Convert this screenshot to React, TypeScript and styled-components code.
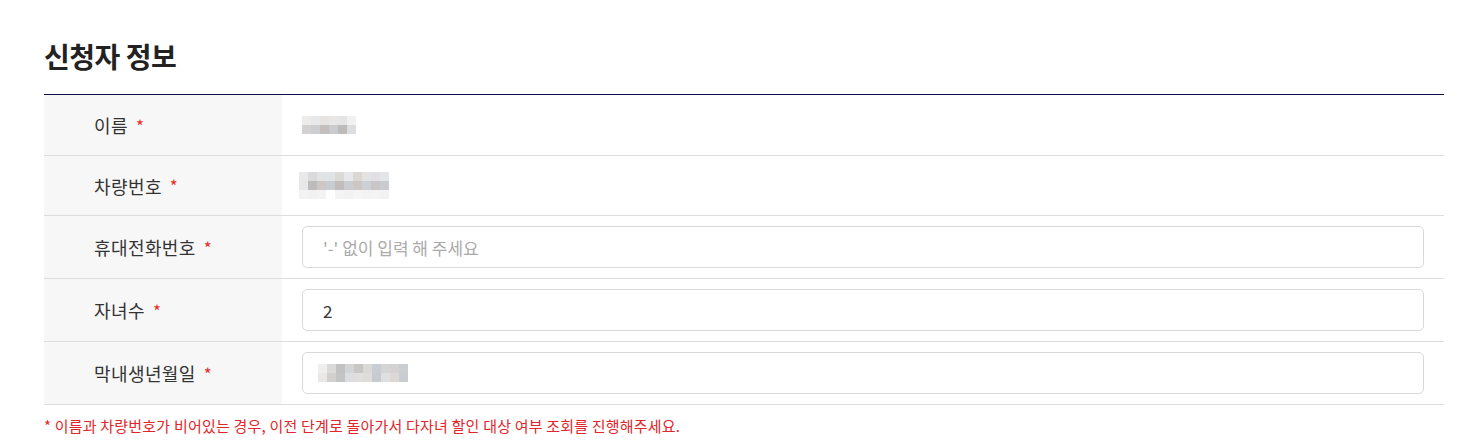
import React from "react";
import styled, { createGlobalStyle } from "styled-components";

const Global = createGlobalStyle`
  html, body { margin: 0; padding: 0; background: #fff; }
  body { font-family: "Noto Sans CJK KR", "Noto Sans", sans-serif; color: #333; }
  * { box-sizing: border-box; }
`;

const Page = styled.div`
  padding: 36px 20px 0 44px;
  width: 1464px;
`;

const Title = styled.h2`
  margin: 0 0 18px;
  font-size: 28px;
  line-height: 40px;
  font-weight: 700;
  color: #222;
  letter-spacing: -0.5px;
`;

const Table = styled.div`
  width: 1400px;
  border-top: 1px solid #0b1148;
`;

const Row = styled.div<{ $h: number }>`
  display: grid;
  grid-template-columns: 238px 1fr;
  height: ${(p) => p.$h}px;
  border-bottom: 1px solid #dedede;
`;

const Label = styled.div`
  background: #f7f7f7;
  display: flex;
  align-items: center;
  padding-left: 50px;
  font-size: 18px;
  letter-spacing: 0.4px;
  color: #333;
  gap: 8px;
`;

const Star = styled.span`
  color: #e8302a;
  font-size: 17px;
`;

const Cell = styled.div`
  display: flex;
  align-items: center;
  padding: 0 20px;
`;

const Input = styled.input`
  width: 1122px;
  height: 42px;
  border: 1px solid #d9d9d9;
  border-radius: 5px;
  padding: 0 20px;
  font-family: "Noto Sans CJK KR", "Noto Sans", sans-serif;
  font-size: 17px;
  color: #333;
  outline: none;
  background: #fff;
  &::placeholder { color: #aaa; }
`;

const InputBox = styled.div`
  width: 1122px;
  height: 42px;
  border: 1px solid #d9d9d9;
  border-radius: 5px;
  padding: 0 15px;
  display: flex;
  align-items: center;
`;

const Mosaic = styled.div<{ $cols: number; $dx: number }>`
  display: grid;
  grid-template-columns: repeat(${(p) => p.$cols}, 9px);
  grid-auto-rows: 9px;
  margin-left: ${(p) => p.$dx}px;
`;

const Tile = styled.span<{ $c: string }>`
  background: ${(p) => p.$c};
`;

const Note = styled.p`
  margin: 0;
  padding-top: 10px;
  font-size: 15px;
  letter-spacing: 0.2px;
  line-height: 22px;
  color: #e0262b;
`;

const Pixels = ({ cols, colors, dx = 0 }: { cols: number; colors: string[]; dx?: number }) => (
  <Mosaic $cols={cols} $dx={dx}>
    {colors.map((c, i) => (
      <Tile key={i} $c={c} />
    ))}
  </Mosaic>
);

const nameColors = [
  "#eeecea", "#e7e8ea", "#e6e3e1", "#e8e7e7", "#e6e5e6", "#f1f1f2",
  "#d4d2d0", "#ccced1", "#c4bfbd", "#c9cbcf", "#bdbbbb", "#dcdde0",
];
const carColors = [
  "#e9e9ea", "#dadadc", "#e2e3e4", "#e2e3e4", "#dcdad7", "#e6e8ec", "#dad7d5", "#e3e3e4", "#e1e1e3", "#e4e5e8",
  "#e8e8e8", "#bcbcbd", "#cdc8c5", "#c9cdd1", "#c2bdba", "#c9cdd1", "#ccc7c4", "#cdd1d5", "#c8c6c7", "#c9cbcf",
  "#f3f3f3", "#f2f1f1", "#f3f3f4", "#fff", "#f4f4f4", "#f2f2f2", "#f5f5f5", "#f3f3f3", "#f4f4f4", "#f2f2f3",
];
const birthColors = [
  "#efeeee", "#dcdad9", "#c2c2c2", "#d3d4d6", "#c9c7c5", "#dad9d6", "#c9ccd0", "#d6d5d5", "#d4d2d2", "#cbced1",
  "#eae7e5", "#d1d0cf", "#c4c4c4", "#dcdde0", "#e1dfde", "#dfddd9", "#c7cbcf", "#dedfe1", "#dbd8d6", "#c9ccd0",
];

export default function App() {
  return (
    <Page>
      <Global />
      <Title>신청자 정보</Title>
      <Table>
        <Row $h={61}>
          <Label>
            이름 <Star>*</Star>
          </Label>
          <Cell>
            <Pixels cols={6} colors={nameColors} />
          </Cell>
        </Row>
        <Row $h={60}>
          <Label>
            차량번호 <Star>*</Star>
          </Label>
          <Cell>
            <Pixels cols={10} colors={carColors} dx={-3} />
          </Cell>
        </Row>
        <Row $h={63}>
          <Label>
            휴대전화번호 <Star>*</Star>
          </Label>
          <Cell>
            <Input placeholder="'-' 없이 입력 해 주세요" />
          </Cell>
        </Row>
        <Row $h={63}>
          <Label>
            자녀수 <Star>*</Star>
          </Label>
          <Cell>
            <Input defaultValue="2" />
          </Cell>
        </Row>
        <Row $h={63}>
          <Label>
            막내생년월일 <Star>*</Star>
          </Label>
          <Cell>
            <InputBox>
              <Pixels cols={10} colors={birthColors} />
            </InputBox>
          </Cell>
        </Row>
      </Table>
      <Note>* 이름과 차량번호가 비어있는 경우, 이전 단계로 돌아가서 다자녀 할인 대상 여부 조회를 진행해주세요.</Note>
    </Page>
  );
}
